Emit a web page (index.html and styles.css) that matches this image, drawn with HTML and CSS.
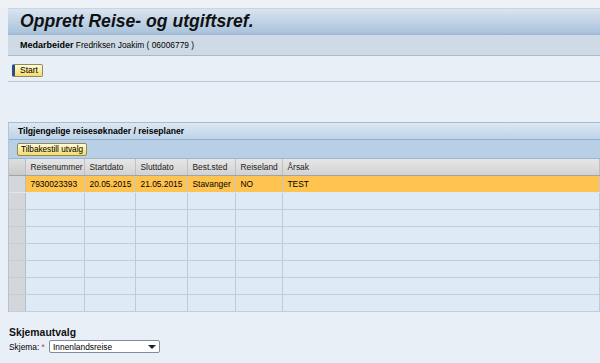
FILE: index.html
```html
<!DOCTYPE html>
<html lang="no">

<head>
    <meta charset="UTF-8" />
    <title>Opprett Reise- og utgiftsref.</title>
    <link rel="stylesheet" href="styles.css">
</head>

<body>
    <div class="page">
        <div class="title-bar">
            <h1>Opprett Reise- og utgiftsref.</h1>
        </div>
        <div class="info-bar">
            <strong>Medarbeider</strong> Fredriksen Joakim ( 06006779 )
        </div>

        <div class="actions">
            <button class="btn btn-focus">Start</button>
        </div>

        <div class="panel">
            <div class="panel-title">Tilgjengelige reisesøknader / reiseplaner</div>
            <div class="panel-toolbar">
                <button class="btn">Tilbakestill utvalg</button>
            </div>
            <table class="grid">
                <colgroup>
                    <col class="c-sel">
                    <col class="c-nr">
                    <col class="c-start">
                    <col class="c-slutt">
                    <col class="c-sted">
                    <col class="c-land">
                    <col>
                </colgroup>
                <thead>
                    <tr>
                        <th class="sel"></th>
                        <th>Reisenummer</th>
                        <th>Startdato</th>
                        <th>Sluttdato</th>
                        <th>Best.sted</th>
                        <th>Reiseland</th>
                        <th>Årsak</th>
                    </tr>
                </thead>
                <tbody>
                    <tr class="selected">
                        <td class="sel"></td>
                        <td>7930023393</td>
                        <td>20.05.2015</td>
                        <td>21.05.2015</td>
                        <td>Stavanger</td>
                        <td>NO</td>
                        <td>TEST</td>
                    </tr>
                    <tr><td class="sel"></td><td></td><td></td><td></td><td></td><td></td><td></td></tr>
                    <tr><td class="sel"></td><td></td><td></td><td></td><td></td><td></td><td></td></tr>
                    <tr><td class="sel"></td><td></td><td></td><td></td><td></td><td></td><td></td></tr>
                    <tr><td class="sel"></td><td></td><td></td><td></td><td></td><td></td><td></td></tr>
                    <tr><td class="sel"></td><td></td><td></td><td></td><td></td><td></td><td></td></tr>
                    <tr><td class="sel"></td><td></td><td></td><td></td><td></td><td></td><td></td></tr>
                    <tr><td class="sel"></td><td></td><td></td><td></td><td></td><td></td><td></td></tr>
                </tbody>
            </table>
        </div>

        <div class="form">
            <h2>Skjemautvalg</h2>
            <div class="field">
                <label>Skjema: <span class="req">*</span></label>
                <div class="select">
                    <span>Innenlandsreise</span>
                    <span class="arrow"></span>
                </div>
            </div>
        </div>
    </div>
</body>

</html>
```

FILE: styles.css
```css
body {
    margin: 0;
    background: #e9eff7;
    font-family: "Liberation Sans", Arial, sans-serif;
    font-size: 8.5px;
    color: #000;
}

.page {
    padding-top: 8px;
    background: linear-gradient(#eef2f6 0, #eef2f6 8px, transparent 8px);
}

.title-bar {
    margin-left: 8px;
    height: 24px;
    border-top: 1px solid #c9d6e2;
    background: linear-gradient(#d9e4f0, #aac3dc);
    border-bottom: 2px solid #a2bad1;
    display: flex;
    align-items: center;
}

h1 {
    margin: 0 0 0 12px;
    font-size: 17.6px;
    font-style: italic;
    font-weight: bold;
    color: #111;
}

.info-bar {
    margin-left: 8px;
    height: 20px;
    line-height: 20px;
    padding-left: 12px;
    background: #cedbe6;
    border-bottom: 1px solid #a6bbcd;
    font-size: 8.4px;
}

.info-bar strong {
    font-size: 9px;
}

.actions {
    margin-left: 8px;
    padding: 8px 0 3px 4px;
    border-bottom: 1px solid #b9c8d6;
    height: 14px;
}

.btn {
    font-family: "Liberation Sans", Arial, sans-serif;
    font-size: 8.5px;
    height: 13px;
    padding: 0 4px;
    line-height: 11px;
    border: 1px solid #8f8a63;
    border-radius: 2px;
    background: linear-gradient(#fffbd6, #f6dc6a);
    color: #000;
}

.btn-focus {
    border-left: 3px solid #2c4c86;
    padding-left: 5px;
    width: 31px;
}

.panel {
    margin: 40px 0 0 8px;
    border-top: 1px solid #a9bccd;
    border-left: 1px solid #b4c4d3;
}

.panel-title {
    height: 16px;
    line-height: 16px;
    padding-left: 9px;
    font-size: 8.6px;
    font-weight: bold;
    background: linear-gradient(#dde8f3, #bdd3e8);
    border-bottom: 1px solid #8fb0cf;
}

.panel-toolbar {
    height: 18px;
    padding-left: 8px;
    display: flex;
    align-items: center;
    background: #b8cfe6;
    border-bottom: 1px solid #9cb6cd;
}

.panel-toolbar .btn {
    padding: 0 3px;
    font-size: 8.2px;
}

.grid {
    width: 100%;
    border-collapse: collapse;
    table-layout: fixed;
}

.c-sel { width: 16px; }
.c-nr { width: 59px; }
.c-start { width: 51px; }
.c-slutt { width: 52px; }
.c-sted { width: 48px; }
.c-land { width: 47px; }

.grid th,
.grid td {
    height: 16px;
    padding: 0 0 0 5px;
    font-size: 8.4px;
    font-weight: normal;
    text-align: left;
    border-right: 1px solid #bfcad6;
    border-bottom: 1px solid #c3ced9;
    white-space: nowrap;
    overflow: hidden;
}

.grid th {
    color: #222;
    background: linear-gradient(#e6e6e6, #d2d2d2);
    border-right-color: #c0c0c0;
    border-bottom: 1px solid #9da4aa;
}

.grid td {
    background: #deeaf5;
}

.grid .sel {
    padding: 0;
    background: #d3d7dc;
    border-right: 1px solid #b9bec4;
}

.grid th.sel {
    background: linear-gradient(#dedede, #cbcbcb);
}

.grid tr.selected td {
    background: #ffc34f;
    border-bottom-color: #e3e7ea;
}

.grid tr.selected td.sel {
    background: #d3d7dc;
}

.form {
    padding: 14px 9px 0;
}

h2 {
    margin: 0 0 1px;
    font-size: 10.4px;
    line-height: 13px;
    font-weight: bold;
    color: #111;
}

.field {
    display: flex;
    align-items: center;
    font-size: 8.4px;
}

.req {
    color: #d9312f;
}

.field label {
    width: 40px;
    white-space: nowrap;
}

.select {
    width: 103px;
    height: 11px;
    padding: 0 3px 0 3px;
    border: 1px solid #7f8c99;
    border-radius: 2px;
    background: #fff;
    display: flex;
    align-items: center;
    justify-content: space-between;
    font-size: 8.4px;
}

.arrow {
    width: 0;
    height: 0;
    border-left: 4px solid transparent;
    border-right: 4px solid transparent;
    border-top: 4px solid #222;
}
```
